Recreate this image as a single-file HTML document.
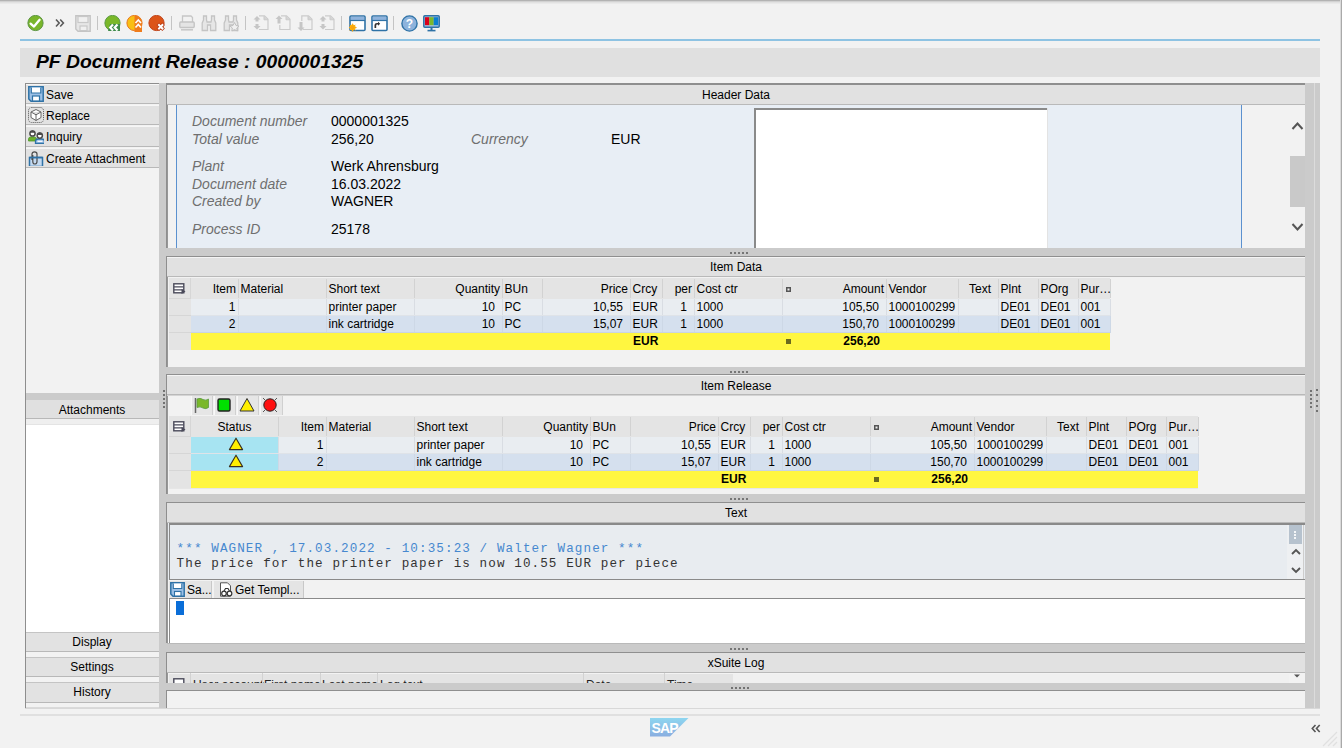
<!DOCTYPE html>
<html><head><meta charset="utf-8"><title>PF Document Release</title>
<style>
html,body{margin:0;padding:0;}
body{width:1342px;height:748px;overflow:hidden;position:relative;background:#f2f2f2;font-family:"Liberation Sans", sans-serif;font-size:12px;color:#000;}
body div, body svg{position:absolute;}
body div div, body div svg{position:absolute;}
</style></head><body>
<div style="left:0px;top:0px;width:1342px;height:1px;background:#b3b3b3;"></div><div style="left:0px;top:1px;width:1342px;height:1px;background:#d2d2d2;"></div><div style="left:0px;top:2px;width:1342px;height:1px;background:#e2e2e2;"></div><div style="left:0px;top:3px;width:1342px;height:1px;background:#eaeaea;"></div><div style="left:1341px;top:0px;width:1px;height:748px;background:#a9a9a9;"></div><div style="left:1340px;top:0px;width:1px;height:748px;background:#dadada;"></div><svg style="left:27px;top:15px" width="17" height="17" viewBox="0 0 17 17"><circle cx="8.5" cy="8" r="7.6" fill="#79b52a" stroke="#5b9440" stroke-width="1"/><path d="M3.6 8.6 L7 11.6 L12.6 4.8" fill="none" stroke="#fff" stroke-width="2.3" stroke-linejoin="round" stroke-linecap="round"/></svg><svg style="left:55px;top:18px" width="10" height="10" viewBox="0 0 10 10"><path d="M1 1.5 L4.2 5 L1 8.5 M5.2 1.5 L8.4 5 L5.2 8.5" fill="none" stroke="#5a5a5a" stroke-width="1.6"/></svg><svg style="left:75px;top:15px" width="16" height="17" viewBox="0 0 16 17"><path d="M0.8 0.8 H15.2 V16.2 H3 L0.8 14 Z" fill="#e6e6e6" stroke="#c4c4c4" stroke-width="1.4"/><rect x="3" y="1.5" width="10" height="6" fill="#f0f0f0" stroke="#c8c8c8" stroke-width="1.2"/><rect x="5" y="11" width="7" height="4.6" fill="#f0f0f0" stroke="#c8c8c8" stroke-width="1.2"/></svg><div style="left:97px;top:16px;width:1px;height:14px;background:#c4c4c4;"></div><svg style="left:104px;top:15px" width="17" height="17" viewBox="0 0 17 17"><circle cx="8.5" cy="8" r="7.6" fill="#7ab829" stroke="#5b9a40" stroke-width="1"/><path d="M4 16 L6 9 H16 V16 Z" fill="#3f8a4a"/><path d="M9 9.5 L6.2 12.5 L9 15.5 M13.5 9.5 L10.7 12.5 L13.5 15.5" fill="none" stroke="#fff" stroke-width="2.2"/></svg><svg style="left:126px;top:15px" width="17" height="17" viewBox="0 0 17 17"><circle cx="8.5" cy="8" r="7.6" fill="#f9bf14" stroke="#e8781f" stroke-width="1"/><path d="M8.5 0.5 A7.6 7.6 0 0 1 16 8 V17 H8.5 Z" fill="#ef7c1c"/><path d="M9.5 8 L12.3 5 L15 8 M9.5 12.5 L12.3 9.5 L15 12.5" fill="none" stroke="#fff" stroke-width="1.7"/></svg><svg style="left:148px;top:15px" width="18" height="17" viewBox="0 0 18 17"><circle cx="8.5" cy="8" r="7.6" fill="#dc5418" stroke="#c0441a" stroke-width="1"/><path d="M9.8 8.8 L15.6 14.8 M15.6 8.8 L9.8 14.8" stroke="#b83a12" stroke-width="3.6"/><path d="M10.3 9.3 L15.1 14.3 M15.1 9.3 L10.3 14.3" stroke="#fff" stroke-width="2"/></svg><div style="left:171px;top:16px;width:1px;height:14px;background:#c4c4c4;"></div><svg style="left:179px;top:15px" width="16" height="17" viewBox="0 0 16 17"><path d="M3.5 7 V1 H12 L13.5 2.5 V7" fill="none" stroke="#c6c6c6" stroke-width="1.3"/><rect x="0.8" y="7" width="14.4" height="5.5" rx="1" fill="#e4e4e4" stroke="#c4c4c4" stroke-width="1.4"/><rect x="2" y="14" width="12" height="1.6" fill="#c8c8c8"/></svg><svg style="left:201px;top:15px" width="16" height="17" viewBox="0 0 16 17"><path d="M2.5 1 H5.5 V5 L6 7 H10 L10.5 5 V1 H13.5 V5 L14.8 8 V15.5 H9.5 V10 H6.5 V15.5 H1.2 V8 L2.5 5 Z" fill="#e6e6e6" stroke="#c4c4c4" stroke-width="1.3"/></svg><svg style="left:223px;top:15px" width="16" height="17" viewBox="0 0 16 17"><path d="M2.5 1 H5.5 V5 L6 7 H10 L10.5 5 V1 H13.5 V5 L14.8 8 V15.5 H9.5 V10 H6.5 V15.5 H1.2 V8 L2.5 5 Z" fill="#e6e6e6" stroke="#c4c4c4" stroke-width="1.3"/><path d="M11.5 7.5 L13 10.5 L16 11 L13.8 13 L14.3 16 L11.5 14.5 L8.8 16 L9.3 13 L7 11 L10 10.5 Z" fill="#f0f0f0" stroke="#c0c0c0" stroke-width="1"/></svg><div style="left:245px;top:16px;width:1px;height:14px;background:#c4c4c4;"></div><svg style="left:253px;top:15px" width="16" height="17" viewBox="0 0 16 17"><path d="M6 0.8 H11.5 L15 4.3 V14.5 H6" fill="none" stroke="#cbcbcb" stroke-width="1.2"/><path d="M11 1 V4.8 H15" fill="#d4d4d4" stroke="#cbcbcb" stroke-width="1"/><path d="M4 1 L7.5 4.5 H5.5 V6.5 H2.5 V4.5 H0.5 Z M4 14.5 L7.5 11 H5.5 V9 H2.5 V11 H0.5 Z" fill="#c6c6c6"/></svg><svg style="left:275px;top:15px" width="16" height="17" viewBox="0 0 16 17"><path d="M6 0.8 H11.5 L15 4.3 V14.5 H4.8 V10" fill="none" stroke="#cbcbcb" stroke-width="1.2"/><path d="M11 1 V4.8 H15" fill="#d4d4d4" stroke="#cbcbcb" stroke-width="1"/><path d="M4 0.5 L7.5 4 H5.5 V8.5 H2.5 V4 H0.5 Z" fill="#c6c6c6"/></svg><svg style="left:297px;top:15px" width="16" height="17" viewBox="0 0 16 17"><path d="M4.8 6 V0.8 H11.5 L15 4.3 V14.5 H6" fill="none" stroke="#cbcbcb" stroke-width="1.2"/><path d="M11 1 V4.8 H15" fill="#d4d4d4" stroke="#cbcbcb" stroke-width="1"/><path d="M4 16 L7.5 12.5 H5.5 V7 H2.5 V12.5 H0.5 Z" fill="#c6c6c6"/></svg><svg style="left:319px;top:15px" width="16" height="17" viewBox="0 0 16 17"><path d="M6 0.8 H11.5 L15 4.3 V14.5 H6" fill="none" stroke="#cbcbcb" stroke-width="1.2"/><path d="M11 1 V4.8 H15" fill="#d4d4d4" stroke="#cbcbcb" stroke-width="1"/><path d="M4 1 L7.5 4.5 H5.5 V6.5 H2.5 V4.5 H0.5 Z M4 14.5 L7.5 11 H5.5 V9 H2.5 V11 H0.5 Z" fill="#c6c6c6"/></svg><div style="left:341px;top:16px;width:1px;height:14px;background:#c4c4c4;"></div><svg style="left:349px;top:15px" width="17" height="17" viewBox="0 0 17 17"><rect x="1" y="1" width="15" height="14.5" rx="1" fill="#fff" stroke="#2f72a6" stroke-width="1.6"/><rect x="1.8" y="1.8" width="13.4" height="3.4" fill="#8fb3dd"/><path d="M1 5.5 H16" stroke="#2f72a6" stroke-width="1.2"/><circle cx="3.6" cy="12.6" r="3" fill="#f9b80f"/><path d="M3.6 8.6 V16.6 M-0.4 12.6 H7.6 M0.8 9.8 L6.4 15.4 M6.4 9.8 L0.8 15.4" stroke="#f9a40f" stroke-width="1"/><rect x="0" y="9" width="0.2" height="0.2" fill="none"/></svg><svg style="left:371px;top:15px" width="17" height="17" viewBox="0 0 17 17"><rect x="1" y="1" width="15" height="14.5" rx="1" fill="#fff" stroke="#2f72a6" stroke-width="1.6"/><rect x="1.8" y="1.8" width="13.4" height="3.4" fill="#8fb3dd"/><path d="M1 5.5 H16" stroke="#2f72a6" stroke-width="1.2"/><path d="M3.5 13 V10 Q3.5 8 6 8 H7 V6.8 L9.2 8.8 L7 10.8 V9.6 H6 Q5.2 9.6 5.2 11 V13 Z" fill="#333"/></svg><div style="left:393px;top:16px;width:1px;height:14px;background:#c4c4c4;"></div><svg style="left:401px;top:15px" width="17" height="17" viewBox="0 0 17 17"><circle cx="8.5" cy="8.5" r="7.6" fill="#8db3dc" stroke="#2f72a6" stroke-width="1.4"/><text x="8.5" y="12.8" font-family="Liberation Sans" font-weight="bold" font-size="12" fill="#fff" text-anchor="middle">?</text></svg><svg style="left:423px;top:15px" width="17" height="17" viewBox="0 0 17 17"><rect x="0.8" y="0.8" width="15.4" height="11.4" rx="1" fill="#a9c3e4" stroke="#2f72a6" stroke-width="1.5"/><rect x="2" y="2.2" width="4.3" height="8" fill="#d9001b"/><rect x="6.3" y="2.2" width="4.4" height="8" fill="#7cb82a"/><rect x="10.7" y="2.2" width="4.4" height="8" fill="#0a7fd0"/><path d="M8.5 12 V15" stroke="#2f72a6" stroke-width="2"/><path d="M4.5 15.6 H12.5" stroke="#2f72a6" stroke-width="1.6"/></svg><div style="left:20px;top:39px;width:1300px;height:2px;background:#8ec3e3;"></div><div style="left:20px;top:48px;width:1300px;height:29px;background:#e0e0e0;"></div><div style="top:51.36px;font-size:18px;line-height:22px;font-family:'Liberation Sans', sans-serif;color:#000;font-weight:bold;font-style:italic;white-space:pre;left:36px;transform:scaleX(1.072);transform-origin:0 0;">PF Document Release : 0000001325</div><div style="left:25px;top:83px;width:134px;height:626px;background:#f2f2f2;"></div><div style="left:25px;top:83px;width:1px;height:626px;background:#8e8e8e;"></div><div style="left:25px;top:83px;width:134px;height:1px;background:#8e8e8e;"></div><div style="left:26px;top:84px;width:133px;height:20px;background:#e2e2e2;"></div><div style="left:26px;top:103px;width:133px;height:1px;background:#b8b8b8;"></div><div style="left:26px;top:84px;width:133px;height:1px;background:#f6f6f6;"></div><div style="top:87.54px;font-size:12px;line-height:15px;font-family:'Liberation Sans', sans-serif;color:#000;font-weight:normal;font-style:normal;white-space:pre;left:46px;">Save</div><svg style="left:28px;top:86px" width="16" height="16" viewBox="0 0 16 16"><path d="M0.8 0.8 H15.2 V15.2 H3 L0.8 13 Z" fill="#9cc0e6" stroke="#2f72a6" stroke-width="1.5"/><rect x="3.3" y="1.5" width="9.5" height="5.5" fill="#fff"/><path d="M3.3 1.5 V7 H12.8 V1.5" fill="none" stroke="#2f72a6" stroke-width="1.2"/><rect x="4.5" y="10" width="7" height="5" fill="#fff" stroke="#2f72a6" stroke-width="1.2"/></svg><div style="left:26px;top:105px;width:133px;height:20px;background:#e2e2e2;"></div><div style="left:26px;top:124px;width:133px;height:1px;background:#b8b8b8;"></div><div style="left:26px;top:105px;width:133px;height:1px;background:#f6f6f6;"></div><div style="top:108.54px;font-size:12px;line-height:15px;font-family:'Liberation Sans', sans-serif;color:#000;font-weight:normal;font-style:normal;white-space:pre;left:46px;">Replace</div><svg style="left:28px;top:107px" width="16" height="16" viewBox="0 0 16 16"><rect x="0.5" y="0.5" width="15" height="15" rx="3" fill="none" stroke="#555" stroke-width="1" stroke-dasharray="1 1"/><path d="M8 2.5 L13 5 V10.5 L8 13.5 L3 10.5 V5 Z M3 5 L8 7.8 L13 5 M8 7.8 V13.5" fill="#fff" stroke="#666" stroke-width="1"/></svg><div style="left:26px;top:126px;width:133px;height:21px;background:#e2e2e2;"></div><div style="left:26px;top:146px;width:133px;height:1px;background:#b8b8b8;"></div><div style="left:26px;top:126px;width:133px;height:1px;background:#f6f6f6;"></div><div style="top:129.54px;font-size:12px;line-height:15px;font-family:'Liberation Sans', sans-serif;color:#000;font-weight:normal;font-style:normal;white-space:pre;left:46px;">Inquiry</div><svg style="left:28px;top:128px" width="16" height="16" viewBox="0 0 16 16"><path d="M0.5 13 V11 Q0.5 9 3 9 H6 Q8.5 9 8.5 11 V13 Z" fill="#6cb02c" stroke="#4f9a2a" stroke-width="0.8"/><circle cx="4.5" cy="5.5" r="2.6" fill="#fff" stroke="#4a4a4a" stroke-width="1.5"/><path d="M1.9 4.8 Q2.5 2.2 4.5 2.2 Q6.5 2.2 7.1 4.8" fill="#4a4a4a"/><path d="M7.5 15.5 V13.3 Q7.5 11 10 11 H14 Q16.5 11 16.5 13.3 V15.5 Z" fill="#9cc0e6" stroke="#2f72a6" stroke-width="1.3"/><path d="M9.5 13.3 H14.5" stroke="#fff" stroke-width="1.2"/><circle cx="11.8" cy="7.6" r="2.6" fill="#fff" stroke="#4a4a4a" stroke-width="1.5"/><path d="M9.2 6.9 Q9.8 4.3 11.8 4.3 Q13.8 4.3 14.4 6.9" fill="#4a4a4a"/></svg><div style="left:26px;top:148px;width:133px;height:20px;background:#e2e2e2;"></div><div style="left:26px;top:167px;width:133px;height:1px;background:#b8b8b8;"></div><div style="left:26px;top:148px;width:133px;height:1px;background:#f6f6f6;"></div><div style="top:151.54px;font-size:12px;line-height:15px;font-family:'Liberation Sans', sans-serif;color:#000;font-weight:normal;font-style:normal;white-space:pre;left:46px;">Create Attachment</div><svg style="left:28px;top:150px" width="16" height="16" viewBox="0 0 16 16"><path d="M1.5 7.5 H14.5 V16.5 H1.5 Z" fill="#c5daf0" stroke="#2f72a6" stroke-width="1.5"/><path d="M4 10 V4 Q4 1.8 6.5 1.8 Q9 1.8 9 4 V11.5 Q9 14 6.8 14 Q4.8 14 4.8 11.5 V5" fill="none" stroke="#4a4a4a" stroke-width="1.2"/><path d="M1.5 7.5 H14.5" stroke="#2f72a6" stroke-width="1.6"/></svg><div style="left:26px;top:393px;width:133px;height:7px;background:#cbcbcb;"></div><div style="left:26px;top:400px;width:133px;height:19px;background:#e0e0e0;"></div><div style="left:26px;top:418px;width:133px;height:1px;background:#b8b8b8;"></div><div style="left:26px;top:419px;width:133px;height:5px;background:#efefef;"></div><div style="left:26px;top:424px;width:133px;height:1px;background:#e4e4e4;"></div><div style="left:26px;top:425px;width:133px;height:207px;background:#ffffff;"></div><div style="top:402.54px;font-size:12px;line-height:15px;font-family:'Liberation Sans', sans-serif;color:#000;font-weight:normal;font-style:normal;white-space:pre;left:27.0px;width:130px;text-align:center;">Attachments</div><div style="left:26px;top:632px;width:133px;height:20px;background:#e2e2e2;"></div><div style="left:26px;top:651px;width:133px;height:1px;background:#b8b8b8;"></div><div style="left:26px;top:632px;width:133px;height:1px;background:#c4c4c4;"></div><div style="top:634.84px;font-size:12px;line-height:15px;font-family:'Liberation Sans', sans-serif;color:#000;font-weight:normal;font-style:normal;white-space:pre;left:27.0px;width:130px;text-align:center;">Display</div><div style="left:26px;top:657px;width:133px;height:20px;background:#e2e2e2;"></div><div style="left:26px;top:676px;width:133px;height:1px;background:#b8b8b8;"></div><div style="left:26px;top:657px;width:133px;height:1px;background:#c4c4c4;"></div><div style="top:659.84px;font-size:12px;line-height:15px;font-family:'Liberation Sans', sans-serif;color:#000;font-weight:normal;font-style:normal;white-space:pre;left:27.0px;width:130px;text-align:center;">Settings</div><div style="left:26px;top:682px;width:133px;height:21px;background:#e2e2e2;"></div><div style="left:26px;top:702px;width:133px;height:1px;background:#b8b8b8;"></div><div style="left:26px;top:682px;width:133px;height:1px;background:#c4c4c4;"></div><div style="top:684.84px;font-size:12px;line-height:15px;font-family:'Liberation Sans', sans-serif;color:#000;font-weight:normal;font-style:normal;white-space:pre;left:27.0px;width:130px;text-align:center;">History</div><div style="left:26px;top:707px;width:133px;height:1px;background:#dadada;"></div><div style="left:159px;top:83px;width:7px;height:626px;background:#cbcbcb;"></div><div style="left:162.5px;top:389.5px;width:2.2px;height:2.2px;background:#555;border-radius:1px;"></div><div style="left:162.5px;top:393.5px;width:2.2px;height:2.2px;background:#555;border-radius:1px;"></div><div style="left:162.5px;top:397.5px;width:2.2px;height:2.2px;background:#555;border-radius:1px;"></div><div style="left:162.5px;top:401.5px;width:2.2px;height:2.2px;background:#555;border-radius:1px;"></div><div style="left:162.5px;top:405.5px;width:2.2px;height:2.2px;background:#555;border-radius:1px;"></div><div style="left:166px;top:83px;width:1140px;height:626px;background:#f2f2f2;"></div><div style="left:166px;top:83px;width:1px;height:626px;background:#8e8e8e;"></div><div style="left:167px;top:83px;width:1px;height:626px;background:#979797;"></div><div style="left:166px;top:83px;width:1140px;height:2px;background:#8e8e8e;"></div><div style="left:167px;top:85px;width:1138px;height:19px;background:#e1e1e1;"></div><div style="left:167px;top:104px;width:1138px;height:1px;background:#b9b9b9;"></div><div style="top:87.84px;font-size:12px;line-height:15px;font-family:'Liberation Sans', sans-serif;color:#000;font-weight:normal;font-style:normal;white-space:pre;left:636.0px;width:200px;text-align:center;">Header Data</div><div style="left:176px;top:105px;width:1066px;height:143px;background:#e8eef5;"></div><div style="left:176px;top:105px;width:1px;height:143px;background:#5b91cf;"></div><div style="left:1241px;top:105px;width:1px;height:143px;background:#5b91cf;"></div><div style="left:754px;top:108px;width:294px;height:140px;background:#ffffff;"></div><div style="left:754px;top:108px;width:294px;height:2px;background:#8a8a8a;"></div><div style="left:754px;top:108px;width:2px;height:140px;background:#8a8a8a;"></div><div style="left:1047px;top:108px;width:1px;height:140px;background:#e3e3e3;"></div><div style="top:111.85px;font-size:14px;line-height:18px;font-family:'Liberation Sans', sans-serif;color:#6f6f6f;font-weight:normal;font-style:italic;white-space:pre;left:192px;">Document number</div><div style="top:111.85px;font-size:14px;line-height:18px;font-family:'Liberation Sans', sans-serif;color:#000;font-weight:normal;font-style:normal;white-space:pre;left:331px;">0000001325</div><div style="top:129.75px;font-size:14px;line-height:18px;font-family:'Liberation Sans', sans-serif;color:#6f6f6f;font-weight:normal;font-style:italic;white-space:pre;left:192px;">Total value</div><div style="top:129.75px;font-size:14px;line-height:18px;font-family:'Liberation Sans', sans-serif;color:#000;font-weight:normal;font-style:normal;white-space:pre;left:331px;">256,20</div><div style="top:156.75px;font-size:14px;line-height:18px;font-family:'Liberation Sans', sans-serif;color:#6f6f6f;font-weight:normal;font-style:italic;white-space:pre;left:192px;">Plant</div><div style="top:156.75px;font-size:14px;line-height:18px;font-family:'Liberation Sans', sans-serif;color:#000;font-weight:normal;font-style:normal;white-space:pre;left:331px;">Werk Ahrensburg</div><div style="top:174.55px;font-size:14px;line-height:18px;font-family:'Liberation Sans', sans-serif;color:#6f6f6f;font-weight:normal;font-style:italic;white-space:pre;left:192px;">Document date</div><div style="top:174.55px;font-size:14px;line-height:18px;font-family:'Liberation Sans', sans-serif;color:#000;font-weight:normal;font-style:normal;white-space:pre;left:331px;">16.03.2022</div><div style="top:192.35px;font-size:14px;line-height:18px;font-family:'Liberation Sans', sans-serif;color:#6f6f6f;font-weight:normal;font-style:italic;white-space:pre;left:192px;">Created by</div><div style="top:192.35px;font-size:14px;line-height:18px;font-family:'Liberation Sans', sans-serif;color:#000;font-weight:normal;font-style:normal;white-space:pre;left:331px;">WAGNER</div><div style="top:219.65px;font-size:14px;line-height:18px;font-family:'Liberation Sans', sans-serif;color:#6f6f6f;font-weight:normal;font-style:italic;white-space:pre;left:192px;">Process ID</div><div style="top:219.65px;font-size:14px;line-height:18px;font-family:'Liberation Sans', sans-serif;color:#000;font-weight:normal;font-style:normal;white-space:pre;left:331px;">25178</div><div style="top:129.75px;font-size:14px;line-height:18px;font-family:'Liberation Sans', sans-serif;color:#6f6f6f;font-weight:normal;font-style:italic;white-space:pre;left:471px;">Currency</div><div style="top:129.75px;font-size:14px;line-height:18px;font-family:'Liberation Sans', sans-serif;color:#000;font-weight:normal;font-style:normal;white-space:pre;left:611px;">EUR</div><div style="left:1290px;top:156px;width:15px;height:51px;background:#c9c9c9;"></div><svg style="left:1291px;top:121px" width="13" height="10" viewBox="0 0 13 10"><path d="M1.5 8 L6.5 2.5 L11.5 8" fill="none" stroke="#555" stroke-width="2"/></svg><svg style="left:1291px;top:222px" width="13" height="10" viewBox="0 0 13 10"><path d="M1.5 2 L6.5 7.5 L11.5 2" fill="none" stroke="#555" stroke-width="2"/></svg><div style="left:166px;top:248px;width:1139px;height:9px;background:#cbcbcb;"></div><div style="left:166px;top:256px;width:1139px;height:1px;background:#8f8f8f;"></div><div style="left:167px;top:257px;width:1138px;height:1px;background:#f7f7f7;"></div><div style="left:730px;top:252px;width:2px;height:2px;background:#5a5a5a;border-radius:1px;"></div><div style="left:734px;top:252px;width:2px;height:2px;background:#5a5a5a;border-radius:1px;"></div><div style="left:738px;top:252px;width:2px;height:2px;background:#5a5a5a;border-radius:1px;"></div><div style="left:742px;top:252px;width:2px;height:2px;background:#5a5a5a;border-radius:1px;"></div><div style="left:746px;top:252px;width:2px;height:2px;background:#5a5a5a;border-radius:1px;"></div><div style="left:167px;top:257px;width:1138px;height:19px;background:#e1e1e1;"></div><div style="left:167px;top:276px;width:1138px;height:1px;background:#b9b9b9;"></div><div style="top:260.44px;font-size:12px;line-height:15px;font-family:'Liberation Sans', sans-serif;color:#000;font-weight:normal;font-style:normal;white-space:pre;left:636.0px;width:200px;text-align:center;">Item Data</div><div style="left:167px;top:257px;width:1138px;height:1px;background:#f4f4f4;"></div><div style="left:169px;top:278px;width:22px;height:21px;background:#e4e4e4;"></div><div style="left:191px;top:278px;width:919px;height:21px;background:#e4e4e4;"></div><div style="left:190px;top:278px;width:1px;height:72px;background:#d6d6d6;"></div><div style="left:169px;top:298px;width:21px;height:1px;background:#d6d6d6;"></div><svg style="left:173px;top:283px" width="13" height="12" viewBox="0 0 13 12"><rect x="0.8" y="0.8" width="10" height="9" fill="#fff" stroke="#4a4a5a" stroke-width="1.4"/><path d="M1 3.8 H10.5 M1 6.8 H10.5" stroke="#4a4a5a" stroke-width="1.3"/><path d="M8.5 6 L12.5 8.5 L8.5 11 Z" fill="#4a4a5a"/></svg><div style="left:238px;top:279px;width:1px;height:19px;background:#d2d2d2;"></div><div style="top:281.94px;font-size:12px;line-height:15px;font-family:'Liberation Sans', sans-serif;color:#000;font-weight:normal;font-style:normal;white-space:pre;left:189px;width:47px;text-align:right;">Item</div><div style="left:326px;top:279px;width:1px;height:19px;background:#d2d2d2;"></div><div style="top:281.94px;font-size:12px;line-height:15px;font-family:'Liberation Sans', sans-serif;color:#000;font-weight:normal;font-style:normal;white-space:pre;left:240.5px;">Material</div><div style="left:414px;top:279px;width:1px;height:19px;background:#d2d2d2;"></div><div style="top:281.94px;font-size:12px;line-height:15px;font-family:'Liberation Sans', sans-serif;color:#000;font-weight:normal;font-style:normal;white-space:pre;left:328.5px;">Short text</div><div style="left:502px;top:279px;width:1px;height:19px;background:#d2d2d2;"></div><div style="top:281.94px;font-size:12px;line-height:15px;font-family:'Liberation Sans', sans-serif;color:#000;font-weight:normal;font-style:normal;white-space:pre;left:413px;width:87px;text-align:right;">Quantity</div><div style="left:542px;top:279px;width:1px;height:19px;background:#d2d2d2;"></div><div style="top:281.94px;font-size:12px;line-height:15px;font-family:'Liberation Sans', sans-serif;color:#000;font-weight:normal;font-style:normal;white-space:pre;left:504.5px;">BUn</div><div style="left:630px;top:279px;width:1px;height:19px;background:#d2d2d2;"></div><div style="top:281.94px;font-size:12px;line-height:15px;font-family:'Liberation Sans', sans-serif;color:#000;font-weight:normal;font-style:normal;white-space:pre;left:541px;width:87px;text-align:right;">Price</div><div style="left:662px;top:279px;width:1px;height:19px;background:#d2d2d2;"></div><div style="top:281.94px;font-size:12px;line-height:15px;font-family:'Liberation Sans', sans-serif;color:#000;font-weight:normal;font-style:normal;white-space:pre;left:632.5px;">Crcy</div><div style="left:694px;top:279px;width:1px;height:19px;background:#d2d2d2;"></div><div style="top:281.94px;font-size:12px;line-height:15px;font-family:'Liberation Sans', sans-serif;color:#000;font-weight:normal;font-style:normal;white-space:pre;left:661px;width:31px;text-align:right;">per</div><div style="left:782px;top:279px;width:1px;height:19px;background:#d2d2d2;"></div><div style="top:281.94px;font-size:12px;line-height:15px;font-family:'Liberation Sans', sans-serif;color:#000;font-weight:normal;font-style:normal;white-space:pre;left:696.5px;">Cost ctr</div><div style="left:886px;top:279px;width:1px;height:19px;background:#d2d2d2;"></div><svg style="left:786px;top:287px" width="5" height="5" viewBox="0 0 5 5"><rect x="0" y="0" width="5" height="5" fill="#555"/><rect x="1.5" y="1.5" width="2" height="2" fill="#eee"/></svg><div style="top:281.94px;font-size:12px;line-height:15px;font-family:'Liberation Sans', sans-serif;color:#000;font-weight:normal;font-style:normal;white-space:pre;left:781px;width:103px;text-align:right;">Amount</div><div style="left:958px;top:279px;width:1px;height:19px;background:#d2d2d2;"></div><div style="top:281.94px;font-size:12px;line-height:15px;font-family:'Liberation Sans', sans-serif;color:#000;font-weight:normal;font-style:normal;white-space:pre;left:888.5px;">Vendor</div><div style="left:998px;top:279px;width:1px;height:19px;background:#d2d2d2;"></div><div style="top:281.94px;font-size:12px;line-height:15px;font-family:'Liberation Sans', sans-serif;color:#000;font-weight:normal;font-style:normal;white-space:pre;left:952px;width:39px;text-align:right;">Text</div><div style="left:1038px;top:279px;width:1px;height:19px;background:#d2d2d2;"></div><div style="top:281.94px;font-size:12px;line-height:15px;font-family:'Liberation Sans', sans-serif;color:#000;font-weight:normal;font-style:normal;white-space:pre;left:1000.5px;">Plnt</div><div style="left:1078px;top:279px;width:1px;height:19px;background:#d2d2d2;"></div><div style="top:281.94px;font-size:12px;line-height:15px;font-family:'Liberation Sans', sans-serif;color:#000;font-weight:normal;font-style:normal;white-space:pre;left:1040.5px;">POrg</div><div style="left:1110px;top:279px;width:1px;height:19px;background:#d2d2d2;"></div><div style="top:281.94px;font-size:12px;line-height:15px;font-family:'Liberation Sans', sans-serif;color:#000;font-weight:normal;font-style:normal;white-space:pre;left:1080.5px;">Pur…</div><div style="left:169px;top:299px;width:22px;height:17px;background:#e4e4e4;"></div><div style="left:169px;top:315px;width:22px;height:1px;background:#d6d6d6;"></div><div style="left:191px;top:299px;width:919px;height:17px;background:#e9edf1;"></div><div style="left:238px;top:299px;width:1px;height:17px;background:#d9dde3;"></div><div style="top:299.74px;font-size:12px;line-height:15px;font-family:'Liberation Sans', sans-serif;color:#000;font-weight:normal;font-style:normal;white-space:pre;left:188.5px;width:47px;text-align:right;">1</div><div style="left:326px;top:299px;width:1px;height:17px;background:#d9dde3;"></div><div style="left:414px;top:299px;width:1px;height:17px;background:#d9dde3;"></div><div style="top:299.74px;font-size:12px;line-height:15px;font-family:'Liberation Sans', sans-serif;color:#000;font-weight:normal;font-style:normal;white-space:pre;left:328.5px;">printer paper</div><div style="left:502px;top:299px;width:1px;height:17px;background:#d9dde3;"></div><div style="top:299.74px;font-size:12px;line-height:15px;font-family:'Liberation Sans', sans-serif;color:#000;font-weight:normal;font-style:normal;white-space:pre;left:408px;width:87px;text-align:right;">10</div><div style="left:542px;top:299px;width:1px;height:17px;background:#d9dde3;"></div><div style="top:299.74px;font-size:12px;line-height:15px;font-family:'Liberation Sans', sans-serif;color:#000;font-weight:normal;font-style:normal;white-space:pre;left:504.5px;">PC</div><div style="left:630px;top:299px;width:1px;height:17px;background:#d9dde3;"></div><div style="top:299.74px;font-size:12px;line-height:15px;font-family:'Liberation Sans', sans-serif;color:#000;font-weight:normal;font-style:normal;white-space:pre;left:536px;width:87px;text-align:right;">10,55</div><div style="left:662px;top:299px;width:1px;height:17px;background:#d9dde3;"></div><div style="top:299.74px;font-size:12px;line-height:15px;font-family:'Liberation Sans', sans-serif;color:#000;font-weight:normal;font-style:normal;white-space:pre;left:632.5px;">EUR</div><div style="left:694px;top:299px;width:1px;height:17px;background:#d9dde3;"></div><div style="top:299.74px;font-size:12px;line-height:15px;font-family:'Liberation Sans', sans-serif;color:#000;font-weight:normal;font-style:normal;white-space:pre;left:656px;width:31px;text-align:right;">1</div><div style="left:782px;top:299px;width:1px;height:17px;background:#d9dde3;"></div><div style="top:299.74px;font-size:12px;line-height:15px;font-family:'Liberation Sans', sans-serif;color:#000;font-weight:normal;font-style:normal;white-space:pre;left:696.5px;">1000</div><div style="left:886px;top:299px;width:1px;height:17px;background:#d9dde3;"></div><div style="top:299.74px;font-size:12px;line-height:15px;font-family:'Liberation Sans', sans-serif;color:#000;font-weight:normal;font-style:normal;white-space:pre;left:776px;width:103px;text-align:right;">105,50</div><div style="left:958px;top:299px;width:1px;height:17px;background:#d9dde3;"></div><div style="top:299.74px;font-size:12px;line-height:15px;font-family:'Liberation Sans', sans-serif;color:#000;font-weight:normal;font-style:normal;white-space:pre;left:888.5px;">1000100299</div><div style="left:998px;top:299px;width:1px;height:17px;background:#d9dde3;"></div><div style="left:1038px;top:299px;width:1px;height:17px;background:#d9dde3;"></div><div style="top:299.74px;font-size:12px;line-height:15px;font-family:'Liberation Sans', sans-serif;color:#000;font-weight:normal;font-style:normal;white-space:pre;left:1000.5px;">DE01</div><div style="left:1078px;top:299px;width:1px;height:17px;background:#d9dde3;"></div><div style="top:299.74px;font-size:12px;line-height:15px;font-family:'Liberation Sans', sans-serif;color:#000;font-weight:normal;font-style:normal;white-space:pre;left:1040.5px;">DE01</div><div style="left:1110px;top:299px;width:1px;height:17px;background:#d9dde3;"></div><div style="top:299.74px;font-size:12px;line-height:15px;font-family:'Liberation Sans', sans-serif;color:#000;font-weight:normal;font-style:normal;white-space:pre;left:1080.5px;">001</div><div style="left:191px;top:315px;width:919px;height:1px;background:#dfe3e8;"></div><div style="left:169px;top:316px;width:22px;height:17px;background:#e4e4e4;"></div><div style="left:169px;top:332px;width:22px;height:1px;background:#d6d6d6;"></div><div style="left:191px;top:316px;width:919px;height:17px;background:#d5e0ee;"></div><div style="left:238px;top:316px;width:1px;height:17px;background:#cdd8e6;"></div><div style="top:316.74px;font-size:12px;line-height:15px;font-family:'Liberation Sans', sans-serif;color:#000;font-weight:normal;font-style:normal;white-space:pre;left:188.5px;width:47px;text-align:right;">2</div><div style="left:326px;top:316px;width:1px;height:17px;background:#cdd8e6;"></div><div style="left:414px;top:316px;width:1px;height:17px;background:#cdd8e6;"></div><div style="top:316.74px;font-size:12px;line-height:15px;font-family:'Liberation Sans', sans-serif;color:#000;font-weight:normal;font-style:normal;white-space:pre;left:328.5px;">ink cartridge</div><div style="left:502px;top:316px;width:1px;height:17px;background:#cdd8e6;"></div><div style="top:316.74px;font-size:12px;line-height:15px;font-family:'Liberation Sans', sans-serif;color:#000;font-weight:normal;font-style:normal;white-space:pre;left:408px;width:87px;text-align:right;">10</div><div style="left:542px;top:316px;width:1px;height:17px;background:#cdd8e6;"></div><div style="top:316.74px;font-size:12px;line-height:15px;font-family:'Liberation Sans', sans-serif;color:#000;font-weight:normal;font-style:normal;white-space:pre;left:504.5px;">PC</div><div style="left:630px;top:316px;width:1px;height:17px;background:#cdd8e6;"></div><div style="top:316.74px;font-size:12px;line-height:15px;font-family:'Liberation Sans', sans-serif;color:#000;font-weight:normal;font-style:normal;white-space:pre;left:536px;width:87px;text-align:right;">15,07</div><div style="left:662px;top:316px;width:1px;height:17px;background:#cdd8e6;"></div><div style="top:316.74px;font-size:12px;line-height:15px;font-family:'Liberation Sans', sans-serif;color:#000;font-weight:normal;font-style:normal;white-space:pre;left:632.5px;">EUR</div><div style="left:694px;top:316px;width:1px;height:17px;background:#cdd8e6;"></div><div style="top:316.74px;font-size:12px;line-height:15px;font-family:'Liberation Sans', sans-serif;color:#000;font-weight:normal;font-style:normal;white-space:pre;left:656px;width:31px;text-align:right;">1</div><div style="left:782px;top:316px;width:1px;height:17px;background:#cdd8e6;"></div><div style="top:316.74px;font-size:12px;line-height:15px;font-family:'Liberation Sans', sans-serif;color:#000;font-weight:normal;font-style:normal;white-space:pre;left:696.5px;">1000</div><div style="left:886px;top:316px;width:1px;height:17px;background:#cdd8e6;"></div><div style="top:316.74px;font-size:12px;line-height:15px;font-family:'Liberation Sans', sans-serif;color:#000;font-weight:normal;font-style:normal;white-space:pre;left:776px;width:103px;text-align:right;">150,70</div><div style="left:958px;top:316px;width:1px;height:17px;background:#cdd8e6;"></div><div style="top:316.74px;font-size:12px;line-height:15px;font-family:'Liberation Sans', sans-serif;color:#000;font-weight:normal;font-style:normal;white-space:pre;left:888.5px;">1000100299</div><div style="left:998px;top:316px;width:1px;height:17px;background:#cdd8e6;"></div><div style="left:1038px;top:316px;width:1px;height:17px;background:#cdd8e6;"></div><div style="top:316.74px;font-size:12px;line-height:15px;font-family:'Liberation Sans', sans-serif;color:#000;font-weight:normal;font-style:normal;white-space:pre;left:1000.5px;">DE01</div><div style="left:1078px;top:316px;width:1px;height:17px;background:#cdd8e6;"></div><div style="top:316.74px;font-size:12px;line-height:15px;font-family:'Liberation Sans', sans-serif;color:#000;font-weight:normal;font-style:normal;white-space:pre;left:1040.5px;">DE01</div><div style="left:1110px;top:316px;width:1px;height:17px;background:#cdd8e6;"></div><div style="top:316.74px;font-size:12px;line-height:15px;font-family:'Liberation Sans', sans-serif;color:#000;font-weight:normal;font-style:normal;white-space:pre;left:1080.5px;">001</div><div style="left:191px;top:332px;width:919px;height:1px;background:#c9d4e2;"></div><div style="left:169px;top:333px;width:22px;height:17px;background:#e4e4e4;"></div><div style="left:191px;top:333px;width:919px;height:17px;background:#fff640;"></div><div style="top:333.74px;font-size:12px;line-height:15px;font-family:'Liberation Sans', sans-serif;color:#000;font-weight:bold;font-style:normal;white-space:pre;left:633px;">EUR</div><div style="left:786px;top:339px;width:5px;height:5px;background:#6b6a1e;"></div><div style="top:333.74px;font-size:12px;line-height:15px;font-family:'Liberation Sans', sans-serif;color:#000;font-weight:bold;font-style:normal;white-space:pre;left:777px;width:103px;text-align:right;">256,20</div><div style="left:166px;top:367px;width:1139px;height:8px;background:#cbcbcb;"></div><div style="left:166px;top:374px;width:1139px;height:1px;background:#8f8f8f;"></div><div style="left:167px;top:375px;width:1138px;height:1px;background:#f7f7f7;"></div><div style="left:730px;top:371px;width:2px;height:2px;background:#5a5a5a;border-radius:1px;"></div><div style="left:734px;top:371px;width:2px;height:2px;background:#5a5a5a;border-radius:1px;"></div><div style="left:738px;top:371px;width:2px;height:2px;background:#5a5a5a;border-radius:1px;"></div><div style="left:742px;top:371px;width:2px;height:2px;background:#5a5a5a;border-radius:1px;"></div><div style="left:746px;top:371px;width:2px;height:2px;background:#5a5a5a;border-radius:1px;"></div><div style="left:167px;top:375px;width:1138px;height:19px;background:#e1e1e1;"></div><div style="left:167px;top:394px;width:1138px;height:1px;background:#b9b9b9;"></div><div style="top:378.94px;font-size:12px;line-height:15px;font-family:'Liberation Sans', sans-serif;color:#000;font-weight:normal;font-style:normal;white-space:pre;left:636.0px;width:200px;text-align:center;">Item Release</div><div style="left:167px;top:375px;width:1138px;height:1px;background:#f4f4f4;"></div><div style="left:167px;top:395px;width:1138px;height:1px;background:#d4d4d4;"></div><div style="left:191px;top:396px;width:22px;height:19px;background:#e6e6e6;"></div><div style="left:191px;top:396px;width:1px;height:19px;background:#f8f8f8;"></div><div style="left:212px;top:396px;width:1px;height:19px;background:#d0d0d0;"></div><svg style="left:193px;top:397px" width="16" height="16" viewBox="0 0 16 16"><path d="M2.5 1 V16" stroke="#666" stroke-width="1.5"/><path d="M4 2 Q7 0.5 10 2.5 Q13 4 15.5 2 V10.5 Q13 12.5 10 11 Q7 9 4 10.5 Z" fill="#7ab829" stroke="#5b9a40" stroke-width="0.8"/></svg><div style="left:214px;top:396px;width:22px;height:19px;background:#e6e6e6;"></div><div style="left:214px;top:396px;width:1px;height:19px;background:#f8f8f8;"></div><div style="left:235px;top:396px;width:1px;height:19px;background:#d0d0d0;"></div><svg style="left:216px;top:397px" width="16" height="16" viewBox="0 0 16 16"><rect x="2" y="2" width="12" height="12" rx="1.5" fill="#00e000" stroke="#222" stroke-width="1.4"/></svg><div style="left:237px;top:396px;width:22px;height:19px;background:#e6e6e6;"></div><div style="left:237px;top:396px;width:1px;height:19px;background:#f8f8f8;"></div><div style="left:258px;top:396px;width:1px;height:19px;background:#d0d0d0;"></div><svg style="left:239px;top:397px" width="16" height="16" viewBox="0 0 16 16"><path d="M8 1.5 L15 14 H1 Z" fill="#ffef00" stroke="#333" stroke-width="1" stroke-linejoin="round"/></svg><div style="left:260px;top:396px;width:23px;height:19px;background:#e6e6e6;"></div><div style="left:260px;top:396px;width:1px;height:19px;background:#f8f8f8;"></div><div style="left:282px;top:396px;width:1px;height:19px;background:#d0d0d0;"></div><svg style="left:262px;top:397px" width="16" height="16" viewBox="0 0 16 16"><circle cx="8" cy="8" r="6.2" fill="#ff1010" stroke="#222" stroke-width="1"/><path d="M1 1 L3 3 M15 1 L13 3 M1 15 L3 13 M15 15 L13 13" stroke="#333" stroke-width="0.8"/></svg><div style="left:169px;top:416px;width:22px;height:21px;background:#e4e4e4;"></div><div style="left:191px;top:416px;width:1007px;height:21px;background:#e4e4e4;"></div><div style="left:190px;top:416px;width:1px;height:72px;background:#d6d6d6;"></div><div style="left:169px;top:436px;width:21px;height:1px;background:#d6d6d6;"></div><svg style="left:173px;top:421px" width="13" height="12" viewBox="0 0 13 12"><rect x="0.8" y="0.8" width="10" height="9" fill="#fff" stroke="#4a4a5a" stroke-width="1.4"/><path d="M1 3.8 H10.5 M1 6.8 H10.5" stroke="#4a4a5a" stroke-width="1.3"/><path d="M8.5 6 L12.5 8.5 L8.5 11 Z" fill="#4a4a5a"/></svg><div style="left:278px;top:417px;width:1px;height:19px;background:#d2d2d2;"></div><div style="top:419.94px;font-size:12px;line-height:15px;font-family:'Liberation Sans', sans-serif;color:#000;font-weight:normal;font-style:normal;white-space:pre;left:191.0px;width:87px;text-align:center;">Status</div><div style="left:326px;top:417px;width:1px;height:19px;background:#d2d2d2;"></div><div style="top:419.94px;font-size:12px;line-height:15px;font-family:'Liberation Sans', sans-serif;color:#000;font-weight:normal;font-style:normal;white-space:pre;left:277px;width:47px;text-align:right;">Item</div><div style="left:414px;top:417px;width:1px;height:19px;background:#d2d2d2;"></div><div style="top:419.94px;font-size:12px;line-height:15px;font-family:'Liberation Sans', sans-serif;color:#000;font-weight:normal;font-style:normal;white-space:pre;left:328.5px;">Material</div><div style="left:502px;top:417px;width:1px;height:19px;background:#d2d2d2;"></div><div style="top:419.94px;font-size:12px;line-height:15px;font-family:'Liberation Sans', sans-serif;color:#000;font-weight:normal;font-style:normal;white-space:pre;left:416.5px;">Short text</div><div style="left:590px;top:417px;width:1px;height:19px;background:#d2d2d2;"></div><div style="top:419.94px;font-size:12px;line-height:15px;font-family:'Liberation Sans', sans-serif;color:#000;font-weight:normal;font-style:normal;white-space:pre;left:501px;width:87px;text-align:right;">Quantity</div><div style="left:630px;top:417px;width:1px;height:19px;background:#d2d2d2;"></div><div style="top:419.94px;font-size:12px;line-height:15px;font-family:'Liberation Sans', sans-serif;color:#000;font-weight:normal;font-style:normal;white-space:pre;left:592.5px;">BUn</div><div style="left:718px;top:417px;width:1px;height:19px;background:#d2d2d2;"></div><div style="top:419.94px;font-size:12px;line-height:15px;font-family:'Liberation Sans', sans-serif;color:#000;font-weight:normal;font-style:normal;white-space:pre;left:629px;width:87px;text-align:right;">Price</div><div style="left:750px;top:417px;width:1px;height:19px;background:#d2d2d2;"></div><div style="top:419.94px;font-size:12px;line-height:15px;font-family:'Liberation Sans', sans-serif;color:#000;font-weight:normal;font-style:normal;white-space:pre;left:720.5px;">Crcy</div><div style="left:782px;top:417px;width:1px;height:19px;background:#d2d2d2;"></div><div style="top:419.94px;font-size:12px;line-height:15px;font-family:'Liberation Sans', sans-serif;color:#000;font-weight:normal;font-style:normal;white-space:pre;left:749px;width:31px;text-align:right;">per</div><div style="left:870px;top:417px;width:1px;height:19px;background:#d2d2d2;"></div><div style="top:419.94px;font-size:12px;line-height:15px;font-family:'Liberation Sans', sans-serif;color:#000;font-weight:normal;font-style:normal;white-space:pre;left:784.5px;">Cost ctr</div><div style="left:974px;top:417px;width:1px;height:19px;background:#d2d2d2;"></div><svg style="left:874px;top:425px" width="5" height="5" viewBox="0 0 5 5"><rect x="0" y="0" width="5" height="5" fill="#555"/><rect x="1.5" y="1.5" width="2" height="2" fill="#eee"/></svg><div style="top:419.94px;font-size:12px;line-height:15px;font-family:'Liberation Sans', sans-serif;color:#000;font-weight:normal;font-style:normal;white-space:pre;left:869px;width:103px;text-align:right;">Amount</div><div style="left:1046px;top:417px;width:1px;height:19px;background:#d2d2d2;"></div><div style="top:419.94px;font-size:12px;line-height:15px;font-family:'Liberation Sans', sans-serif;color:#000;font-weight:normal;font-style:normal;white-space:pre;left:976.5px;">Vendor</div><div style="left:1086px;top:417px;width:1px;height:19px;background:#d2d2d2;"></div><div style="top:419.94px;font-size:12px;line-height:15px;font-family:'Liberation Sans', sans-serif;color:#000;font-weight:normal;font-style:normal;white-space:pre;left:1040px;width:39px;text-align:right;">Text</div><div style="left:1126px;top:417px;width:1px;height:19px;background:#d2d2d2;"></div><div style="top:419.94px;font-size:12px;line-height:15px;font-family:'Liberation Sans', sans-serif;color:#000;font-weight:normal;font-style:normal;white-space:pre;left:1088.5px;">Plnt</div><div style="left:1166px;top:417px;width:1px;height:19px;background:#d2d2d2;"></div><div style="top:419.94px;font-size:12px;line-height:15px;font-family:'Liberation Sans', sans-serif;color:#000;font-weight:normal;font-style:normal;white-space:pre;left:1128.5px;">POrg</div><div style="left:1198px;top:417px;width:1px;height:19px;background:#d2d2d2;"></div><div style="top:419.94px;font-size:12px;line-height:15px;font-family:'Liberation Sans', sans-serif;color:#000;font-weight:normal;font-style:normal;white-space:pre;left:1168.5px;">Pur…</div><div style="left:169px;top:437px;width:22px;height:17px;background:#e4e4e4;"></div><div style="left:169px;top:453px;width:22px;height:1px;background:#d6d6d6;"></div><div style="left:191px;top:437px;width:1007px;height:17px;background:#e9edf1;"></div><div style="left:278px;top:437px;width:1px;height:17px;background:#d9dde3;"></div><div style="left:191px;top:437px;width:87px;height:17px;background:#a7e4f2;"></div><svg style="left:228px;top:437px" width="16" height="14" viewBox="0 0 16 14"><path d="M8 1.2 L14.6 12.6 H1.4 Z" fill="#ffef00" stroke="#3a3020" stroke-width="1.1" stroke-linejoin="round"/></svg><div style="left:326px;top:437px;width:1px;height:17px;background:#d9dde3;"></div><div style="top:437.74px;font-size:12px;line-height:15px;font-family:'Liberation Sans', sans-serif;color:#000;font-weight:normal;font-style:normal;white-space:pre;left:276.5px;width:47px;text-align:right;">1</div><div style="left:414px;top:437px;width:1px;height:17px;background:#d9dde3;"></div><div style="left:502px;top:437px;width:1px;height:17px;background:#d9dde3;"></div><div style="top:437.74px;font-size:12px;line-height:15px;font-family:'Liberation Sans', sans-serif;color:#000;font-weight:normal;font-style:normal;white-space:pre;left:416.5px;">printer paper</div><div style="left:590px;top:437px;width:1px;height:17px;background:#d9dde3;"></div><div style="top:437.74px;font-size:12px;line-height:15px;font-family:'Liberation Sans', sans-serif;color:#000;font-weight:normal;font-style:normal;white-space:pre;left:496px;width:87px;text-align:right;">10</div><div style="left:630px;top:437px;width:1px;height:17px;background:#d9dde3;"></div><div style="top:437.74px;font-size:12px;line-height:15px;font-family:'Liberation Sans', sans-serif;color:#000;font-weight:normal;font-style:normal;white-space:pre;left:592.5px;">PC</div><div style="left:718px;top:437px;width:1px;height:17px;background:#d9dde3;"></div><div style="top:437.74px;font-size:12px;line-height:15px;font-family:'Liberation Sans', sans-serif;color:#000;font-weight:normal;font-style:normal;white-space:pre;left:624px;width:87px;text-align:right;">10,55</div><div style="left:750px;top:437px;width:1px;height:17px;background:#d9dde3;"></div><div style="top:437.74px;font-size:12px;line-height:15px;font-family:'Liberation Sans', sans-serif;color:#000;font-weight:normal;font-style:normal;white-space:pre;left:720.5px;">EUR</div><div style="left:782px;top:437px;width:1px;height:17px;background:#d9dde3;"></div><div style="top:437.74px;font-size:12px;line-height:15px;font-family:'Liberation Sans', sans-serif;color:#000;font-weight:normal;font-style:normal;white-space:pre;left:744px;width:31px;text-align:right;">1</div><div style="left:870px;top:437px;width:1px;height:17px;background:#d9dde3;"></div><div style="top:437.74px;font-size:12px;line-height:15px;font-family:'Liberation Sans', sans-serif;color:#000;font-weight:normal;font-style:normal;white-space:pre;left:784.5px;">1000</div><div style="left:974px;top:437px;width:1px;height:17px;background:#d9dde3;"></div><div style="top:437.74px;font-size:12px;line-height:15px;font-family:'Liberation Sans', sans-serif;color:#000;font-weight:normal;font-style:normal;white-space:pre;left:864px;width:103px;text-align:right;">105,50</div><div style="left:1046px;top:437px;width:1px;height:17px;background:#d9dde3;"></div><div style="top:437.74px;font-size:12px;line-height:15px;font-family:'Liberation Sans', sans-serif;color:#000;font-weight:normal;font-style:normal;white-space:pre;left:976.5px;">1000100299</div><div style="left:1086px;top:437px;width:1px;height:17px;background:#d9dde3;"></div><div style="left:1126px;top:437px;width:1px;height:17px;background:#d9dde3;"></div><div style="top:437.74px;font-size:12px;line-height:15px;font-family:'Liberation Sans', sans-serif;color:#000;font-weight:normal;font-style:normal;white-space:pre;left:1088.5px;">DE01</div><div style="left:1166px;top:437px;width:1px;height:17px;background:#d9dde3;"></div><div style="top:437.74px;font-size:12px;line-height:15px;font-family:'Liberation Sans', sans-serif;color:#000;font-weight:normal;font-style:normal;white-space:pre;left:1128.5px;">DE01</div><div style="left:1198px;top:437px;width:1px;height:17px;background:#d9dde3;"></div><div style="top:437.74px;font-size:12px;line-height:15px;font-family:'Liberation Sans', sans-serif;color:#000;font-weight:normal;font-style:normal;white-space:pre;left:1168.5px;">001</div><div style="left:191px;top:453px;width:1007px;height:1px;background:#dfe3e8;"></div><div style="left:169px;top:454px;width:22px;height:17px;background:#e4e4e4;"></div><div style="left:169px;top:470px;width:22px;height:1px;background:#d6d6d6;"></div><div style="left:191px;top:454px;width:1007px;height:17px;background:#d5e0ee;"></div><div style="left:278px;top:454px;width:1px;height:17px;background:#cdd8e6;"></div><div style="left:191px;top:454px;width:87px;height:17px;background:#a7e4f2;"></div><svg style="left:228px;top:454px" width="16" height="14" viewBox="0 0 16 14"><path d="M8 1.2 L14.6 12.6 H1.4 Z" fill="#ffef00" stroke="#3a3020" stroke-width="1.1" stroke-linejoin="round"/></svg><div style="left:326px;top:454px;width:1px;height:17px;background:#cdd8e6;"></div><div style="top:454.74px;font-size:12px;line-height:15px;font-family:'Liberation Sans', sans-serif;color:#000;font-weight:normal;font-style:normal;white-space:pre;left:276.5px;width:47px;text-align:right;">2</div><div style="left:414px;top:454px;width:1px;height:17px;background:#cdd8e6;"></div><div style="left:502px;top:454px;width:1px;height:17px;background:#cdd8e6;"></div><div style="top:454.74px;font-size:12px;line-height:15px;font-family:'Liberation Sans', sans-serif;color:#000;font-weight:normal;font-style:normal;white-space:pre;left:416.5px;">ink cartridge</div><div style="left:590px;top:454px;width:1px;height:17px;background:#cdd8e6;"></div><div style="top:454.74px;font-size:12px;line-height:15px;font-family:'Liberation Sans', sans-serif;color:#000;font-weight:normal;font-style:normal;white-space:pre;left:496px;width:87px;text-align:right;">10</div><div style="left:630px;top:454px;width:1px;height:17px;background:#cdd8e6;"></div><div style="top:454.74px;font-size:12px;line-height:15px;font-family:'Liberation Sans', sans-serif;color:#000;font-weight:normal;font-style:normal;white-space:pre;left:592.5px;">PC</div><div style="left:718px;top:454px;width:1px;height:17px;background:#cdd8e6;"></div><div style="top:454.74px;font-size:12px;line-height:15px;font-family:'Liberation Sans', sans-serif;color:#000;font-weight:normal;font-style:normal;white-space:pre;left:624px;width:87px;text-align:right;">15,07</div><div style="left:750px;top:454px;width:1px;height:17px;background:#cdd8e6;"></div><div style="top:454.74px;font-size:12px;line-height:15px;font-family:'Liberation Sans', sans-serif;color:#000;font-weight:normal;font-style:normal;white-space:pre;left:720.5px;">EUR</div><div style="left:782px;top:454px;width:1px;height:17px;background:#cdd8e6;"></div><div style="top:454.74px;font-size:12px;line-height:15px;font-family:'Liberation Sans', sans-serif;color:#000;font-weight:normal;font-style:normal;white-space:pre;left:744px;width:31px;text-align:right;">1</div><div style="left:870px;top:454px;width:1px;height:17px;background:#cdd8e6;"></div><div style="top:454.74px;font-size:12px;line-height:15px;font-family:'Liberation Sans', sans-serif;color:#000;font-weight:normal;font-style:normal;white-space:pre;left:784.5px;">1000</div><div style="left:974px;top:454px;width:1px;height:17px;background:#cdd8e6;"></div><div style="top:454.74px;font-size:12px;line-height:15px;font-family:'Liberation Sans', sans-serif;color:#000;font-weight:normal;font-style:normal;white-space:pre;left:864px;width:103px;text-align:right;">150,70</div><div style="left:1046px;top:454px;width:1px;height:17px;background:#cdd8e6;"></div><div style="top:454.74px;font-size:12px;line-height:15px;font-family:'Liberation Sans', sans-serif;color:#000;font-weight:normal;font-style:normal;white-space:pre;left:976.5px;">1000100299</div><div style="left:1086px;top:454px;width:1px;height:17px;background:#cdd8e6;"></div><div style="left:1126px;top:454px;width:1px;height:17px;background:#cdd8e6;"></div><div style="top:454.74px;font-size:12px;line-height:15px;font-family:'Liberation Sans', sans-serif;color:#000;font-weight:normal;font-style:normal;white-space:pre;left:1088.5px;">DE01</div><div style="left:1166px;top:454px;width:1px;height:17px;background:#cdd8e6;"></div><div style="top:454.74px;font-size:12px;line-height:15px;font-family:'Liberation Sans', sans-serif;color:#000;font-weight:normal;font-style:normal;white-space:pre;left:1128.5px;">DE01</div><div style="left:1198px;top:454px;width:1px;height:17px;background:#cdd8e6;"></div><div style="top:454.74px;font-size:12px;line-height:15px;font-family:'Liberation Sans', sans-serif;color:#000;font-weight:normal;font-style:normal;white-space:pre;left:1168.5px;">001</div><div style="left:191px;top:470px;width:1007px;height:1px;background:#c9d4e2;"></div><div style="left:169px;top:471px;width:22px;height:17px;background:#e4e4e4;"></div><div style="left:191px;top:471px;width:1007px;height:17px;background:#fff640;"></div><div style="top:471.74px;font-size:12px;line-height:15px;font-family:'Liberation Sans', sans-serif;color:#000;font-weight:bold;font-style:normal;white-space:pre;left:721px;">EUR</div><div style="left:874px;top:477px;width:5px;height:5px;background:#6b6a1e;"></div><div style="top:471.74px;font-size:12px;line-height:15px;font-family:'Liberation Sans', sans-serif;color:#000;font-weight:bold;font-style:normal;white-space:pre;left:865px;width:103px;text-align:right;">256,20</div><div style="left:169px;top:488px;width:1029px;height:1px;background:#e6e6e6;"></div><div style="left:166px;top:494px;width:1139px;height:9px;background:#cbcbcb;"></div><div style="left:166px;top:502px;width:1139px;height:1px;background:#8f8f8f;"></div><div style="left:730px;top:498px;width:2px;height:2px;background:#5a5a5a;border-radius:1px;"></div><div style="left:734px;top:498px;width:2px;height:2px;background:#5a5a5a;border-radius:1px;"></div><div style="left:738px;top:498px;width:2px;height:2px;background:#5a5a5a;border-radius:1px;"></div><div style="left:742px;top:498px;width:2px;height:2px;background:#5a5a5a;border-radius:1px;"></div><div style="left:746px;top:498px;width:2px;height:2px;background:#5a5a5a;border-radius:1px;"></div><div style="left:167px;top:503px;width:1138px;height:19px;background:#e1e1e1;"></div><div style="left:167px;top:522px;width:1138px;height:1px;background:#b9b9b9;"></div><div style="top:506.34px;font-size:12px;line-height:15px;font-family:'Liberation Sans', sans-serif;color:#000;font-weight:normal;font-style:normal;white-space:pre;left:636.0px;width:200px;text-align:center;">Text</div><div style="left:168px;top:523px;width:1137px;height:57px;background:#e8ecf0;"></div><div style="left:169px;top:523px;width:1136px;height:2px;background:#8a8a8a;"></div><div style="left:169px;top:523px;width:1px;height:57px;background:#8a8a8a;"></div><div style="left:169px;top:579px;width:1136px;height:1px;background:#8a8a8a;"></div><div style="top:540.94px;font-size:12.6px;line-height:16px;font-family:'Liberation Mono', monospace;color:#4688cf;font-weight:normal;font-style:normal;white-space:pre;left:176.6px;letter-spacing:1.1px;">*** WAGNER , 17.03.2022 - 10:35:23 / Walter Wagner ***</div><div style="top:555.84px;font-size:12.6px;line-height:16px;font-family:'Liberation Mono', monospace;color:#333;font-weight:normal;font-style:normal;white-space:pre;left:176.6px;letter-spacing:1.1px;">The price for the printer paper is now 10.55 EUR per piece</div><div style="left:1287px;top:525px;width:16px;height:54px;background:#eef0f2;"></div><div style="left:1303px;top:525px;width:1px;height:54px;background:#cdcdcd;"></div><div style="left:1289px;top:525px;width:13px;height:19px;background:#b6c2ce;"></div><div style="left:1294px;top:531px;width:2px;height:1.5px;background:#f4f6f8;"></div><div style="left:1294px;top:534px;width:2px;height:1.5px;background:#f4f6f8;"></div><div style="left:1294px;top:537px;width:2px;height:1.5px;background:#f4f6f8;"></div><svg style="left:1290px;top:548px" width="12" height="8" viewBox="0 0 12 8"><path d="M2 6 L6 2 L10 6" fill="none" stroke="#555" stroke-width="1.9"/></svg><svg style="left:1290px;top:566px" width="12" height="8" viewBox="0 0 12 8"><path d="M2 2 L6 6 L10 2" fill="none" stroke="#555" stroke-width="1.9"/></svg><div style="left:168px;top:580px;width:1137px;height:19px;background:#f2f2f2;"></div><div style="left:169px;top:581px;width:43px;height:17px;background:#e4e4e4;"></div><div style="left:211px;top:581px;width:1px;height:17px;background:#c8c8c8;"></div><svg style="left:170px;top:582px" width="15" height="15" viewBox="0 0 15 15"><path d="M0.8 0.8 H14.2 V14.2 H3 L0.8 12 Z" fill="#9cc0e6" stroke="#2f72a6" stroke-width="1.5"/><rect x="3.3" y="1.5" width="8.5" height="5" fill="#fff"/><path d="M3.3 1.5 V6.5 H11.8 V1.5" fill="none" stroke="#2f72a6" stroke-width="1.1"/><rect x="4.5" y="9.5" width="6.5" height="4.5" fill="#fff" stroke="#2f72a6" stroke-width="1.1"/></svg><div style="top:583.24px;font-size:12px;line-height:15px;font-family:'Liberation Sans', sans-serif;color:#000;font-weight:normal;font-style:normal;white-space:pre;left:187px;">Sa...</div><div style="left:214px;top:581px;width:90px;height:17px;background:#e4e4e4;"></div><div style="left:303px;top:581px;width:1px;height:17px;background:#c8c8c8;"></div><svg style="left:219px;top:582px" width="15" height="15" viewBox="0 0 15 15"><path d="M1.5 0.8 H8.5 L11.5 3.8 V14.2 H1.5 Z" fill="#fff" stroke="#555" stroke-width="1"/><circle cx="5" cy="11.5" r="2.3" fill="#fff" stroke="#333" stroke-width="1.2"/><circle cx="10.5" cy="11.5" r="2.3" fill="#fff" stroke="#333" stroke-width="1.2"/><path d="M5 9 L6.5 6.5 H9 L10.5 9" fill="none" stroke="#333" stroke-width="1.1"/></svg><div style="top:583.24px;font-size:12px;line-height:15px;font-family:'Liberation Sans', sans-serif;color:#000;font-weight:normal;font-style:normal;white-space:pre;left:235px;">Get Templ...</div><div style="left:168px;top:598px;width:1137px;height:45px;background:#ffffff;"></div><div style="left:169px;top:598px;width:1136px;height:1px;background:#8a8a8a;"></div><div style="left:169px;top:598px;width:1px;height:45px;background:#8a8a8a;"></div><div style="left:176px;top:601px;width:8px;height:14px;background:#0a6ed8;"></div><div style="left:166px;top:643px;width:1139px;height:10px;background:#cbcbcb;"></div><div style="left:166px;top:652px;width:1139px;height:1px;background:#8f8f8f;"></div><div style="left:730px;top:648px;width:2px;height:2px;background:#5a5a5a;border-radius:1px;"></div><div style="left:734px;top:648px;width:2px;height:2px;background:#5a5a5a;border-radius:1px;"></div><div style="left:738px;top:648px;width:2px;height:2px;background:#5a5a5a;border-radius:1px;"></div><div style="left:742px;top:648px;width:2px;height:2px;background:#5a5a5a;border-radius:1px;"></div><div style="left:746px;top:648px;width:2px;height:2px;background:#5a5a5a;border-radius:1px;"></div><div style="left:167px;top:643px;width:1138px;height:1px;background:#b9b9b9;"></div><div style="left:167px;top:653px;width:1138px;height:19px;background:#e1e1e1;"></div><div style="left:167px;top:672px;width:1138px;height:1px;background:#b9b9b9;"></div><div style="top:655.84px;font-size:12px;line-height:15px;font-family:'Liberation Sans', sans-serif;color:#000;font-weight:normal;font-style:normal;white-space:pre;left:636.0px;width:200px;text-align:center;">xSuite Log</div><div style="left:168px;top:673px;width:1137px;height:1px;background:#f3f3f3;"></div><div style="left:169px;top:674px;width:564px;height:9px;background:#e4e4e4;"></div><div style="left:733px;top:674px;width:556px;height:9px;background:#f0f0f0;"></div><div style="left:1289px;top:673px;width:16px;height:10px;background:#f2f2f2;"></div><svg style="left:1292px;top:673px" width="10" height="6" viewBox="0 0 10 6"><path d="M2 1.5 H8 L5 4.5 Z" fill="#555"/></svg><div style="left:169px;top:673px;width:1136px;height:10px;overflow:hidden;"><div style="left:24px;top:4.8px;font-size:12px;line-height:15px;color:#222;white-space:pre;">User account</div><div style="left:95px;top:4.8px;font-size:12px;line-height:15px;color:#222;white-space:pre;">First name</div><div style="left:153px;top:4.8px;font-size:12px;line-height:15px;color:#222;white-space:pre;">Last name</div><div style="left:211px;top:4.8px;font-size:12px;line-height:15px;color:#222;white-space:pre;">Log text</div><div style="left:417px;top:4.8px;font-size:12px;line-height:15px;color:#222;white-space:pre;">Date</div><div style="left:498px;top:4.8px;font-size:12px;line-height:15px;color:#222;white-space:pre;">Time</div><svg style="left:4px;top:5px" width="12" height="8"><rect x="0.8" y="0.8" width="10" height="8" fill="#fff" stroke="#4a4a5a" stroke-width="1.4"/></svg></div><div style="left:190px;top:673px;width:1px;height:10px;background:#d2d2d2;"></div><div style="left:262px;top:673px;width:1px;height:10px;background:#d2d2d2;"></div><div style="left:320px;top:673px;width:1px;height:10px;background:#d2d2d2;"></div><div style="left:377px;top:673px;width:1px;height:10px;background:#d2d2d2;"></div><div style="left:583px;top:673px;width:1px;height:10px;background:#d2d2d2;"></div><div style="left:664px;top:673px;width:1px;height:10px;background:#d2d2d2;"></div><div style="left:166px;top:683px;width:1140px;height:8px;background:#cbcbcb;"></div><div style="left:166px;top:690px;width:1140px;height:1px;background:#8f8f8f;"></div><div style="left:730.5px;top:686.7px;width:2px;height:2px;background:#555;border-radius:1px;"></div><div style="left:734.5px;top:686.7px;width:2px;height:2px;background:#555;border-radius:1px;"></div><div style="left:738.5px;top:686.7px;width:2px;height:2px;background:#555;border-radius:1px;"></div><div style="left:742.5px;top:686.7px;width:2px;height:2px;background:#555;border-radius:1px;"></div><div style="left:746.5px;top:686.7px;width:2px;height:2px;background:#555;border-radius:1px;"></div><div style="left:167px;top:691px;width:1138px;height:17px;background:#f2f2f2;"></div><div style="left:1305px;top:83px;width:15px;height:626px;background:#cbcbcb;"></div><div style="left:1314px;top:83px;width:1px;height:626px;background:#dcdcdc;"></div><div style="left:1310px;top:389.5px;width:2px;height:2px;background:#555;border-radius:1px;"></div><div style="left:1316px;top:389.0px;width:2px;height:2px;background:#555;border-radius:1px;"></div><div style="left:1310px;top:393.5px;width:2px;height:2px;background:#555;border-radius:1px;"></div><div style="left:1316px;top:394.3px;width:2px;height:2px;background:#555;border-radius:1px;"></div><div style="left:1310px;top:397.5px;width:2px;height:2px;background:#555;border-radius:1px;"></div><div style="left:1316px;top:399.6px;width:2px;height:2px;background:#555;border-radius:1px;"></div><div style="left:1310px;top:401.5px;width:2px;height:2px;background:#555;border-radius:1px;"></div><div style="left:1316px;top:404.9px;width:2px;height:2px;background:#555;border-radius:1px;"></div><div style="left:1310px;top:405.5px;width:2px;height:2px;background:#555;border-radius:1px;"></div><div style="left:1316px;top:410.2px;width:2px;height:2px;background:#555;border-radius:1px;"></div><div style="left:25px;top:708px;width:1295px;height:1px;background:#d8d8d8;"></div><div style="left:20px;top:714px;width:1300px;height:2px;background:#e0e0e0;"></div><svg style="left:650px;top:718px" width="39" height="19" viewBox="0 0 39 19"><defs><linearGradient id="sg" x1="0" y1="0" x2="0" y2="1"><stop offset="0" stop-color="#8ed6f0"/><stop offset="1" stop-color="#8aaee0"/></linearGradient></defs><path d="M0 0 H38.5 L20 18.5 H0 Z" fill="url(#sg)"/><text x="1.5" y="15" font-family="Liberation Sans" font-weight="bold" font-size="14" fill="#fff" letter-spacing="-0.8">SAP</text></svg><svg style="left:1311px;top:724px" width="10" height="9" viewBox="0 0 10 9"><path d="M4.5 1 L1.3 4.5 L4.5 8 M8.7 1 L5.5 4.5 L8.7 8" fill="none" stroke="#555" stroke-width="1.6"/></svg><svg style="left:1320px;top:729px" width="18" height="18" viewBox="0 0 18 18"><path d="M17 3 L3 17 M17 8 L8 17 M17 13 L13 17" stroke="#e0e0e0" stroke-width="1.2"/></svg>
</body></html>
